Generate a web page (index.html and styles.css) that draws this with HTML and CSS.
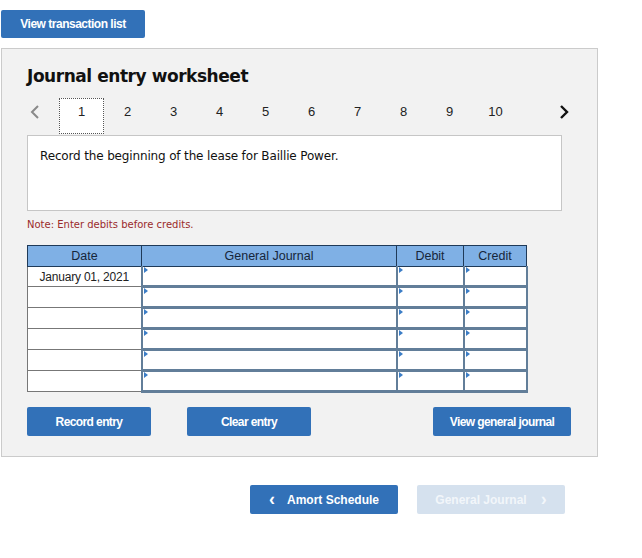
FILE: index.html
```html
<!DOCTYPE html>
<html>
<head>
<meta charset="utf-8">
<link rel="stylesheet" href="styles.css">
</head>
<body>
<div class="page">
  <button class="btn btn-top">View transaction list</button>
  <div class="panel">
    <h2 class="title">Journal entry worksheet</h2>
    <div class="pager">
      <span class="pg-prev"><svg width="10" height="14" viewBox="0 0 10 14"><path d="M8 1 L2 7 L8 13" fill="none" stroke="#8a8a8a" stroke-width="2"/></svg></span>
      <span class="pg pg-active">1</span>
      <span class="pg">2</span>
      <span class="pg">3</span>
      <span class="pg">4</span>
      <span class="pg">5</span>
      <span class="pg">6</span>
      <span class="pg">7</span>
      <span class="pg">8</span>
      <span class="pg">9</span>
      <span class="pg">10</span>
      <span class="pg-next"><svg width="10" height="14" viewBox="0 0 10 14"><path d="M2 1 L8 7 L2 13" fill="none" stroke="#111" stroke-width="2.4"/></svg></span>
    </div>
    <div class="desc">Record the beginning of the lease for Baillie Power.</div>
    <div class="note">Note: Enter debits before credits.</div>
    <table class="journal">
      <colgroup><col class="c-date"><col class="c-gj"><col class="c-dr"><col class="c-cr"></colgroup>
      <thead>
        <tr><th>Date</th><th>General Journal</th><th>Debit</th><th>Credit</th></tr>
      </thead>
      <tbody>
        <tr><td class="date">January 01, 2021</td><td class="inp"></td><td class="inp"></td><td class="inp"></td></tr>
        <tr><td class="date"></td><td class="inp"></td><td class="inp"></td><td class="inp"></td></tr>
        <tr><td class="date"></td><td class="inp"></td><td class="inp"></td><td class="inp"></td></tr>
        <tr><td class="date"></td><td class="inp"></td><td class="inp"></td><td class="inp"></td></tr>
        <tr><td class="date"></td><td class="inp"></td><td class="inp"></td><td class="inp"></td></tr>
        <tr><td class="date"></td><td class="inp"></td><td class="inp"></td><td class="inp"></td></tr>
      </tbody>
    </table>
    <div class="actions">
      <button class="btn btn-act">Record entry</button>
      <button class="btn btn-act btn-clear">Clear entry</button>
      <button class="btn btn-act btn-view">View general journal</button>
    </div>
  </div>
  <div class="nav">
    <button class="btn btn-nav"><span class="chev">&lsaquo;</span>Amort Schedule</button>
    <button class="btn btn-nav btn-disabled">General Journal<span class="chev chev-r">&rsaquo;</span></button>
  </div>
</div>
</body>
</html>
```

FILE: styles.css
```css
html, body {
  margin: 0;
  padding: 0;
  background: #fff;
}
.page {
  padding: 10px 0 0 1px;
  font-family: "Liberation Sans", Arial, sans-serif;
  color: #222;
}
.btn {
  border: none;
  border-radius: 2px;
  background: #3271b8;
  color: #fff;
  font-family: "Liberation Sans", Arial, sans-serif;
  font-weight: bold;
  font-size: 12px;
  padding: 0;
  cursor: pointer;
}
.btn-top {
  display: block;
  width: 144px;
  height: 28px;
  letter-spacing: -0.5px;
}
.panel {
  margin-top: 10px;
  height: 407px;
  border: 1px solid #cbcbcb;
  background: #f2f2f2;
  padding: 0 0 0 25px;
  box-sizing: content-box;
  width: 570px;
}
.title {
  margin: 16px 0 0 0;
  font-family: "DejaVu Sans", Verdana, sans-serif;
  font-weight: bold;
  font-size: 17px;
  line-height: 22px;
  color: #111;
  letter-spacing: -0.45px;
}
.pager {
  display: flex;
  align-items: flex-start;
  height: 36px;
  margin-top: 11px;
  font-size: 13px;
  color: #222;
}
.pg-prev {
  width: 32px;
  display: flex;
  align-items: center;
  padding-left: 3px;
  padding-top: 7px;
  box-sizing: border-box;
}
.pg {
  width: 45px;
  height: 36px;
  margin-right: 1px;
  display: flex;
  justify-content: center;
  padding-top: 6px;
  box-sizing: border-box;
}
.pg-active {
  background: #fff;
  border: 1px dotted #555;
  padding-top: 5px;
}
.pg-next {
  margin-left: 40px;
  padding-top: 7px;
  display: flex;
}
.desc {
  margin-top: 1px;
  width: 535px;
  height: 76px;
  box-sizing: border-box;
  border: 1px solid #c6c6c6;
  background: #fff;
  padding: 13px 12px;
  font-family: "DejaVu Sans", Verdana, sans-serif;
  font-size: 12px;
  letter-spacing: -0.15px;
  color: #111;
}
.note {
  margin-top: 8px;
  font-family: "DejaVu Sans", Verdana, sans-serif;
  font-size: 10px;
  color: #9b2b2b;
  line-height: 12px;
}
.journal {
  margin-top: 14px;
  border-collapse: collapse;
  table-layout: fixed;
  width: 499px;
  font-size: 12px;
}
.c-date { width: 114px; }
.c-gj { width: 255px; }
.c-dr { width: 67px; }
.c-cr { width: 63px; }
.journal th {
  background: #7fb0e5;
  border: 1px solid #1f3a58;
  height: 20px;
  padding: 0;
  font-weight: normal;
  font-size: 12.5px;
  color: #16263a;
  text-align: center;
}
.journal td {
  height: 18px;
  padding: 0;
  background: #fff;
}
.journal td.date {
  border: 1px solid #777;
  text-align: center;
  color: #222;
  letter-spacing: -0.2px;
}
.journal td.inp {
  border: 2px solid #627e99;
  border-top-width: 3px;
  border-bottom-width: 3px;
  position: relative;
}
.journal tbody tr:first-child td.inp {
  border-top-width: 1px;
}
.journal td.inp::before {
  content: "";
  position: absolute;
  left: 1px;
  top: 0;
  border-left: 4px solid #3b7dc6;
  border-top: 3px solid transparent;
  border-bottom: 3px solid transparent;
}
.actions {
  display: flex;
  margin-top: 14px;
}
.btn-act {
  width: 124px;
  height: 29px;
  letter-spacing: -0.6px;
}
.btn-clear {
  margin-left: 36px;
}
.btn-view {
  margin-left: 122px;
  width: 138px;
}
.nav {
  display: flex;
  margin: 28px 0 0 249px;
  gap: 19px;
}
.btn-nav {
  width: 148px;
  height: 29px;
  display: flex;
  align-items: center;
  justify-content: center;
}
.chev {
  font-size: 18px;
  font-weight: bold;
  margin-right: 12px;
  line-height: 1;
  position: relative;
  top: -1px;
}
.chev-r {
  margin-right: 0;
  margin-left: 14px;
}
.btn-disabled {
  background: #d5e1ee;
  color: #f2f6fa;
}
```
